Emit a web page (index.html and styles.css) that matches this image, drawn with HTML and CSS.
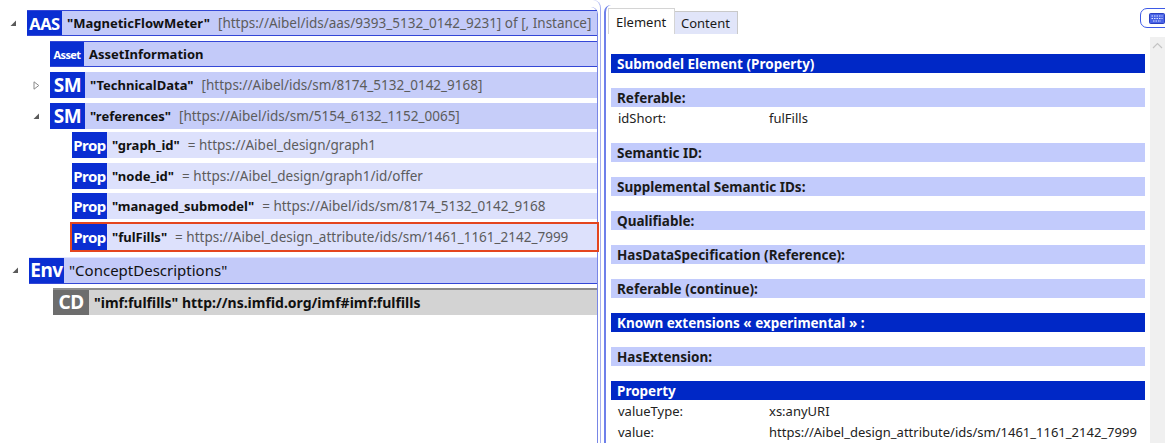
FILE: index.html
```html
<!DOCTYPE html>
<html lang="en">
<head>
<meta charset="utf-8">
<title>AAS Explorer</title>
<link rel="stylesheet" href="styles.css">
</head>
<body>
<div class="app">
  <!-- left: element tree -->
  <div class="tree-pane">
    <div class="tree">
      <div class="node n-aas">
        <span class="toggle"><svg width="7" height="7" viewBox="0 0 7 7"><path d="M6 0.5 L6 6 L0.5 6 Z" fill="#5a5a5a"/></svg></span>
        <div class="item row-strong">
          <span class="badge b-aas">AAS</span>
          <span class="name">"MagneticFlowMeter"</span>
          <span class="info">[https://Aibel/ids/aas/9393_5132_0142_9231] of [, Instance]</span>
        </div>
      </div>
      <div class="node n-lvl1">
        <span class="toggle"></span>
        <div class="item row-strong">
          <span class="badge b-asset">Asset</span>
          <span class="name">AssetInformation</span>
        </div>
      </div>
      <div class="node n-lvl1">
        <span class="toggle"><svg width="7" height="9" viewBox="0 0 7 9"><path d="M1 0.8 L5.8 4.5 L1 8.2 Z" fill="none" stroke="#8a8a8a" stroke-width="1"/></svg></span>
        <div class="item row-sm">
          <span class="badge b-big">SM</span>
          <span class="name">"TechnicalData"</span>
          <span class="info">[https://Aibel/ids/sm/8174_5132_0142_9168]</span>
        </div>
      </div>
      <div class="node n-lvl1">
        <span class="toggle"><svg width="7" height="7" viewBox="0 0 7 7"><path d="M6 0.5 L6 6 L0.5 6 Z" fill="#5a5a5a"/></svg></span>
        <div class="item row-sm">
          <span class="badge b-big">SM</span>
          <span class="name">"references"</span>
          <span class="info">[https://Aibel/ids/sm/5154_6132_1152_0065]</span>
        </div>
      </div>
      <div class="node n-lvl2 first-prop">
        <div class="item row-prop">
          <span class="badge b-prop">Prop</span>
          <span class="name">"graph_id"</span>
          <span class="info">= https://Aibel_design/graph1</span>
        </div>
      </div>
      <div class="node n-lvl2">
        <div class="item row-prop">
          <span class="badge b-prop">Prop</span>
          <span class="name">"node_id"</span>
          <span class="info">= https://Aibel_design/graph1/id/offer</span>
        </div>
      </div>
      <div class="node n-lvl2">
        <div class="item row-prop">
          <span class="badge b-prop">Prop</span>
          <span class="name">"managed_submodel"</span>
          <span class="info">= https://Aibel/ids/sm/8174_5132_0142_9168</span>
        </div>
      </div>
      <div class="node n-lvl2">
        <div class="item row-prop selected">
          <span class="badge b-prop">Prop</span>
          <span class="name">"fulFills"</span>
          <span class="info">= https://Aibel_design_attribute/ids/sm/1461_1161_2142_7999</span>
        </div>
      </div>
      <div class="node n-env">
        <span class="toggle"><svg width="7" height="7" viewBox="0 0 7 7"><path d="M6 0.5 L6 6 L0.5 6 Z" fill="#5a5a5a"/></svg></span>
        <div class="item row-env">
          <span class="badge b-big">Env</span>
          <span class="name plain">"ConceptDescriptions"</span>
        </div>
      </div>
      <div class="node n-cd">
        <div class="item row-cd">
          <span class="badge b-big b-cd">CD</span>
          <span class="name wide">"imf:fulfills" http://ns.imfid.org/imf#imf:fulfills</span>
        </div>
      </div>
    </div>
  </div>

  <!-- right: element details -->
  <div class="detail-pane">
    <div class="tabbar">
      <div class="tabs">
        <div class="tab active">Element</div>
        <div class="tab">Content</div>
      </div>
      <button class="kbd-btn" type="button">
        <svg width="16" height="11" viewBox="0 0 16 11">
          <rect x="0.5" y="0.5" width="15" height="10" rx="1" fill="#4a64e6" stroke="#2a3fc0"/>
          <path d="M2.5 3 H13.5 M2.5 5.5 H13.5 M4 8 H12" stroke="#dfe4ff" stroke-width="1" stroke-dasharray="1.5 1"/>
        </svg>
      </button>
    </div>
    <div class="scroller">
      <div class="content">
        <section class="group"><div class="bar dark">Submodel Element (Property)</div></section>
        <section class="group">
          <div class="bar">Referable:</div>
          <div class="field"><span class="label">idShort:</span><span class="value">fulFills</span></div>
        </section>
        <section class="group"><div class="bar">Semantic ID:</div></section>
        <section class="group"><div class="bar">Supplemental Semantic IDs:</div></section>
        <section class="group"><div class="bar">Qualifiable:</div></section>
        <section class="group"><div class="bar">HasDataSpecification (Reference):</div></section>
        <section class="group"><div class="bar">Referable (continue):</div></section>
        <section class="group"><div class="bar dark">Known extensions « experimental » :</div></section>
        <section class="group"><div class="bar">HasExtension:</div></section>
        <section class="group">
          <div class="bar dark">Property</div>
          <div class="field"><span class="label">valueType:</span><span class="value">xs:anyURI</span></div>
          <div class="field"><span class="label">value:</span><span class="value">https://Aibel_design_attribute/ids/sm/1461_1161_2142_7999</span></div>
        </section>
      </div>
      <div class="vscroll">
        <svg width="11" height="7" viewBox="0 0 11 7"><path d="M1 6 L5.5 1.5 L10 6" fill="none" stroke="#c4c4c4" stroke-width="1.2"/></svg>
      </div>
    </div>
  </div>
</div>
</body>
</html>
```

FILE: styles.css
```css
html, body {
  margin: 0;
  padding: 0;
}

body {
  width: 1165px;
  height: 443px;
  overflow: hidden;
  background: #ffffff;
  font-family: "Noto Sans", "Open Sans", "DejaVu Sans", sans-serif;
  font-size: 13px;
  color: #1a1a1a;
}

.app {
  display: flex;
  height: 443px;
}

/* ---------- tree ---------- */

.tree-pane {
  flex: none;
  width: 601px;
  box-sizing: border-box;
  padding-top: 7px;
  border-right: 1px solid #a6b0f0;
  border-top-right-radius: 8px;
}

.tree {
  height: 100%;
  box-sizing: border-box;
  margin-right: 2px;
  padding-top: 3px;
  border-right: 1px solid #7886e6;
  border-top-right-radius: 7px;
}

.node {
  display: flex;
  align-items: stretch;
  margin-top: 5px;
}

.node:first-child {
  margin-top: 0;
}

.n-aas { padding-left: 8px; }
.n-lvl1 { padding-left: 31px; }
.n-lvl2 { padding-left: 72px; margin-top: 4.5px; }
.n-lvl2.first-prop { margin-top: 3px; }
.n-env { padding-left: 10px; margin-top: 7px; }
.n-cd { padding-left: 53px; margin-top: 4px; }

.toggle {
  flex: none;
  width: 19px;
  display: flex;
  align-items: center;
  justify-content: flex-start;
  padding-left: 2px;
  box-sizing: border-box;
}

.item {
  flex: 1;
  display: flex;
  align-items: center;
  height: 26px;
  box-sizing: border-box;
  white-space: nowrap;
  overflow: hidden;
}

.row-strong {
  background: #c3caf9;
  border-top: 1px solid #3447d6;
  border-bottom: 1px solid #3447d6;
}

.row-sm {
  background: #c6cdf9;
}

.row-prop {
  background: #dde1fc;
}

.row-prop.selected {
  outline: 2px solid #e4461e;
}

.row-env {
  height: 27px;
  background: #c3caf9;
  border-top: 1px solid #e2e6fd;
  border-bottom: 1px solid #3447d6;
}

.row-cd {
  height: 27px;
  background: #d3d3d3;
  border-top: 2px solid #8c8c8c;
}

.badge {
  flex: none;
  align-self: stretch;
  display: flex;
  align-items: center;
  justify-content: center;
  width: 35px;
  background: #0a2ed2;
  color: #ffffff;
  font-weight: 700;
  letter-spacing: -0.5px;
}

.row-strong .badge {
  margin: -1px 0;
}

.b-aas { font-size: 16.5px; }
.b-asset { font-size: 11px; width: 34px; letter-spacing: -0.6px; }
.b-big { font-size: 19px; }
.b-prop { font-size: 15px; }
.b-cd { background: #6d6d6d; width: 36px; }

.name {
  margin-left: 5px;
  font-weight: 700;
  color: #111111;
}

.name.plain {
  font-weight: 400;
  font-size: 15px;
}

.name.wide {
  font-size: 14px;
}

.info {
  margin-left: 8px;
  color: #5c5c5c;
  font-size: 13.5px;
}

/* ---------- details ---------- */

.detail-pane {
  flex: 1;
  min-width: 0;
  display: flex;
  flex-direction: column;
  margin-left: 3px;
  margin-top: 5px;
  border-left: 2px solid #6e80ea;
  border-top-left-radius: 7px;
  overflow: hidden;
}

.tabbar {
  flex: none;
  display: flex;
  justify-content: space-between;
  align-items: flex-start;
  padding-left: 2px;
  padding-top: 3px;
  height: 29px;
  box-sizing: border-box;
}

.tabs {
  display: flex;
  align-items: flex-end;
  height: 26px;
}

.tab {
  height: 23px;
  padding: 0 6px;
  display: flex;
  align-items: center;
  box-sizing: border-box;
  border: 1px solid #c9c9c9;
  border-bottom: none;
  background: #e1e5f9;
  color: #1a1a1a;
  font-size: 13px;
}

.tab.active {
  height: 26px;
  width: 67px;
  padding-left: 7px;
  background: #ffffff;
  border-color: #d4d4d4;
}

.tab + .tab {
  width: 63px;
  border-left: none;
}

.kbd-btn {
  flex: none;
  width: 34px;
  height: 20px;
  margin-top: 0;
  margin-right: -9px;
  padding: 0 0 0 8px;
  display: flex;
  align-items: center;
  background: #ffffff;
  border: 1.5px solid #3d5ae6;
  border-radius: 7px;
}

.scroller {
  flex: 1;
  display: flex;
  margin-top: 3px;
  min-height: 0;
}

.content {
  flex: 1;
  padding: 17px 5px 0 5px;
}

.group + .group {
  margin-top: 15px;
}

.bar {
  height: 19px;
  display: flex;
  align-items: center;
  padding-left: 6px;
  background: #c2cbfc;
  color: #1a1a1a;
  font-weight: 700;
  font-size: 13.5px;
}

.bar.dark {
  background: #0028c6;
  color: #ffffff;
}

.field {
  display: flex;
  align-items: center;
  height: 21px;
  padding-left: 7px;
  color: #222222;
  font-size: 13px;
}

.label {
  flex: none;
  width: 151px;
}

.vscroll {
  flex: none;
  width: 15px;
  background: #f0f0f0;
  display: flex;
  justify-content: center;
  padding-top: 5px;
  align-items: flex-start;
}
```
